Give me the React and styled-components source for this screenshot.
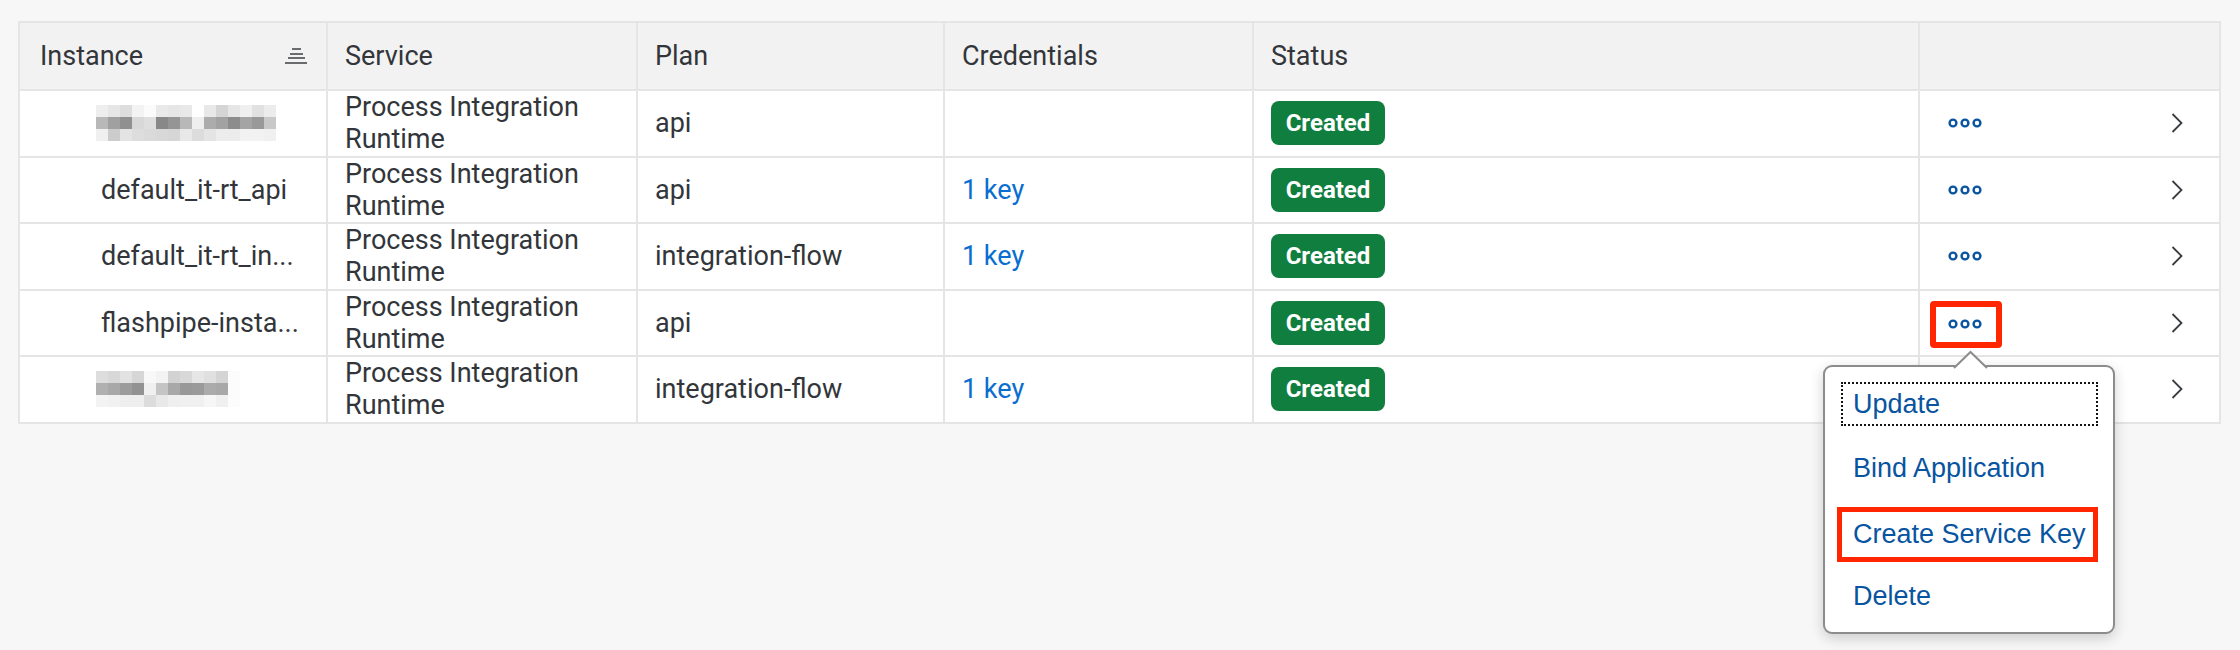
import styled, { createGlobalStyle } from 'styled-components';

const GlobalStyle = createGlobalStyle`
  html, body {
    margin: 0;
    padding: 0;
    background: #f7f7f7;
  }
  body {
    font-family: Roboto, "Liberation Sans", sans-serif;
    color: #32363a;
  }
`;

const Page = styled.div`
  position: relative;
  width: 2240px;
  height: 650px;
  padding: 21px 0 0 18px;
  box-sizing: border-box;
`;

const Table = styled.table`
  border-collapse: collapse;
  table-layout: fixed;
  width: 2203px;
  background: #fff;
  border: 2px solid #e5e5e5;
  font-size: 27px;
  line-height: 32px;
`;

const HeadCell = styled.th`
  height: 66px;
  padding: 0 17px;
  background: #f2f2f2;
  border: 2px solid #e5e5e5;
  text-align: left;
  font-weight: 400;
  color: #32363a;
  white-space: nowrap;
`;

const HeadInner = styled.div`
  display: flex;
  align-items: center;
  justify-content: space-between;
  padding-left: 3px;
`;

const Cell = styled.td`
  height: 64.5px;
  padding: 0 17px;
  border: 2px solid #e5e5e5;
  vertical-align: middle;
  white-space: ${p => (p.$wrap ? 'normal' : 'nowrap')};
  overflow: hidden;
`;

const InstanceCell = styled(Cell)`
  padding-left: 81px;
`;

const KeyLink = styled.a`
  color: #0a6ed1;
  text-decoration: none;
`;

const Badge = styled.span`
  display: inline-flex;
  align-items: center;
  justify-content: center;
  width: 114px;
  height: 44px;
  border-radius: 8px;
  background: #107e3e;
  color: #fff;
  font-weight: 700;
  font-size: 24px;
  vertical-align: middle;
`;

const ActionWrap = styled.div`
  display: flex;
  align-items: center;
  justify-content: space-between;
  padding: 0 19px 0 0;
  margin-left: -7px;
`;

const DotsButton = styled.button`
  width: 72px;
  height: 47px;
  display: flex;
  align-items: center;
  justify-content: center;
  background: transparent;
  border: 6px solid ${p => (p.$marked ? '#ff2600' : 'transparent')};
  border-radius: 4px;
  padding: 0;
  margin-top: ${p => (p.$marked ? '3px' : '0')};
  cursor: pointer;
`;

const Blur = styled.svg`
  display: block;
  margin-left: -5px;
`;

const Popover = styled.div`
  position: absolute;
  left: 1823px;
  top: 365px;
  width: 292px;
  height: 269px;
  box-sizing: border-box;
  background: #fff;
  border: 2px solid #8c8c8c;
  border-radius: 9px;
  box-shadow: 0 4px 14px rgba(0, 0, 0, 0.18);
  padding-top: 5px;
`;

const Arrow = styled.svg`
  position: absolute;
  left: 128px;
  top: -17px;
`;

const Menu = styled.ul`
  list-style: none;
  margin: 0;
  padding: 0;
`;

const MenuItem = styled.li`
  height: 64px;
  display: flex;
  align-items: center;
  padding: 0 15px 0 12px;
  margin-top: ${p => (p.$marked ? '2px' : '0')};
  margin-bottom: ${p => (p.$marked ? '-2px' : '0')};
`;

const MenuLabel = styled.span`
  flex: 1;
  box-sizing: border-box;
  display: flex;
  align-items: center;
  height: ${p => (p.$marked ? '55px' : '44px')};
  margin-left: ${p => (p.$marked ? '0' : '4px')};
  padding-left: ${p => (p.$marked ? '11px' : '10px')};
  border: ${p =>
    p.$marked ? '5px solid #ff2600' : p.$focused ? '2px dotted #111' : '2px solid transparent'};
  font-family: "Liberation Sans", Arial, sans-serif;
  font-size: 27px;
  color: #0854a0;
  white-space: nowrap;
`;

const SortIcon = () => (
  <svg width="24" height="16" viewBox="0 0 24 16">
    <g stroke="#6a6d70" strokeWidth="2">
      <line x1="7" y1="1" x2="16" y2="1" />
      <line x1="5" y1="6" x2="18" y2="6" />
      <line x1="3" y1="10" x2="20" y2="10" />
      <line x1="0" y1="15" x2="22" y2="15" />
    </g>
  </svg>
);

const Dots = () => (
  <svg width="36" height="10" viewBox="0 0 36 10">
    <g fill="none" stroke="#0854a0" strokeWidth="2.4">
      <circle cx="5" cy="5" r="3.4" />
      <circle cx="17" cy="5" r="3.4" />
      <circle cx="29" cy="5" r="3.4" />
    </g>
  </svg>
);

const Chevron = () => (
  <svg width="12" height="20" viewBox="0 0 12 20">
    <polyline points="1.5,1 10.5,10 1.5,19" fill="none" stroke="#3a3d40" strokeWidth="1.8" />
  </svg>
);

const BLUR_A = [
  ['eee', 'e6e6e6', 'ddd', 'f3f3f3', 'fbfbfb', 'e9e9e9', 'e6e6e6', 'e8e8e8', 'fff', 'e8e8e8', 'd5d5d5', 'e6e6e6', 'efefef', 'e1e1e1', 'ececec'],
  ['b8b8b8', 'a0a0a0', '909090', 'd8d8d8', 'dedede', '888', '959595', 'b8b8b8', 'eee', 'acacac', 'a2a2a2', '8c8c8c', 'a4a4a4', '999', 'c8c8c8'],
  ['f0f0f0', 'ccc', 'e4e4e4', 'ddd', 'dadada', 'd8d8d8', 'd6d6d6', 'e8e8e8', 'dcdcdc', 'e4e4e4', 'ececec', 'ececec', 'f2f2f2', 'f2f2f2', 'f0f0f0'],
];

const BLUR_B = [
  ['ddd', 'd8d8d8', 'e2e2e2', 'd6d6d6', 'f8f8f8', 'f3f3f3', 'd2d2d2', 'd8d8d8', 'e6e6e6', 'e0e0e0', 'd4d4d4', 'fcfcfc'],
  ['b0b0b0', 'a8a8a8', '9c9c9c', '929292', 'f0f0f0', 'c4c4c4', 'a8a8a8', '989898', '9a9a9a', 'ababab', 'a8a8a8', 'fcfcfc'],
  ['f3f3f3', 'f1f1f1', 'eee', 'eee', 'dcdcdc', 'e8e8e8', 'efefef', 'f0f0f0', 'f0f0f0', 'f6f6f6', 'f0f0f0', 'fcfcfc'],
];

const Redacted = ({ cells }) => {
  const cols = cells[0].length;
  return (
    <Blur width={cols * 12} height={36} viewBox={`0 0 ${cols * 12} 36`}>
      {cells.map((row, r) =>
        row.map((c, i) => (
          <rect key={`${r}-${i}`} x={i * 12} y={r * 12} width="12" height="12" fill={`#${c}`} />
        ))
      )}
    </Blur>
  );
};

const rows = [
  { name: <Redacted cells={BLUR_A} />, plan: 'api', keys: '' },
  { name: 'default_it-rt_api', plan: 'api', keys: '1 key' },
  { name: 'default_it-rt_in...', plan: 'integration-flow', keys: '1 key' },
  { name: 'flashpipe-insta...', plan: 'api', keys: '', marked: true },
  { name: <Redacted cells={BLUR_B} />, plan: 'integration-flow', keys: '1 key' },
];

const menu = [
  { label: 'Update', focused: true },
  { label: 'Bind Application' },
  { label: 'Create Service Key', marked: true },
  { label: 'Delete' },
];

export default function App() {
  return (
    <>
      <GlobalStyle />
      <Page>
        <Table>
          <colgroup>
            <col style={{ width: 308 }} />
            <col style={{ width: 310 }} />
            <col style={{ width: 307 }} />
            <col style={{ width: 309 }} />
            <col style={{ width: 666 }} />
            <col style={{ width: 301 }} />
          </colgroup>
          <thead>
            <tr>
              <HeadCell>
                <HeadInner>
                  <span>Instance</span>
                  <SortIcon />
                </HeadInner>
              </HeadCell>
              <HeadCell>Service</HeadCell>
              <HeadCell>Plan</HeadCell>
              <HeadCell>Credentials</HeadCell>
              <HeadCell>Status</HeadCell>
              <HeadCell />
            </tr>
          </thead>
          <tbody>
            {rows.map((r, i) => (
              <tr key={i}>
                <InstanceCell>{r.name}</InstanceCell>
                <Cell $wrap>Process Integration Runtime</Cell>
                <Cell>{r.plan}</Cell>
                <Cell>{r.keys && <KeyLink href="#">{r.keys}</KeyLink>}</Cell>
                <Cell>
                  <Badge>Created</Badge>
                </Cell>
                <Cell>
                  <ActionWrap>
                    <DotsButton $marked={r.marked} aria-label="More">
                      <Dots />
                    </DotsButton>
                    <Chevron />
                  </ActionWrap>
                </Cell>
              </tr>
            ))}
          </tbody>
        </Table>

        <Popover>
          <Arrow width="35" height="19" viewBox="0 0 35 19">
            <polygon points="1,18 17.5,2 34,18" fill="#fff" />
            <polyline points="1,18 17.5,2 34,18" fill="none" stroke="#8c8c8c" strokeWidth="2" />
          </Arrow>
          <Menu>
            {menu.map(m => (
              <MenuItem key={m.label} $marked={m.marked}>
                <MenuLabel $focused={m.focused} $marked={m.marked}>
                  {m.label}
                </MenuLabel>
              </MenuItem>
            ))}
          </Menu>
        </Popover>
      </Page>
    </>
  );
}
